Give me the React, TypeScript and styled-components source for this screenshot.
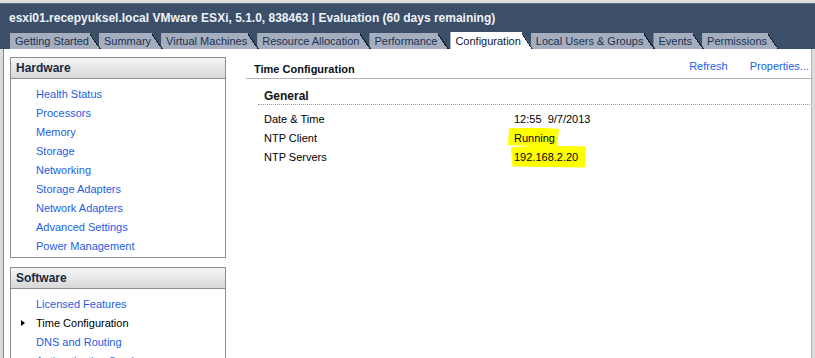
import React from "react";
import styled, { createGlobalStyle } from "styled-components";

const Global = createGlobalStyle`
  html, body { margin: 0; padding: 0; background: #dcdcdc; }
  body { font-family: "Liberation Sans", Arial, sans-serif; font-size: 11px; }
  * { box-sizing: border-box; }
`;

const Page = styled.div`
  width: 815px;
  height: 358px;
  display: flex;
  flex-direction: column;
  overflow: hidden;
  background: #dcdcdc;
  padding-top: 3px;
`;

const Header = styled.div`
  background: #3b4f69;
  border-top: 1px solid #5a6e88;
  height: 46px;
  display: flex;
  flex-direction: column;
`;

const Title = styled.div`
  height: 28px;
  display: flex;
  align-items: center;
  padding-left: 9px;
  color: #eef2f7;
  font-weight: bold;
  font-size: 12px;
  white-space: nowrap;
`;

const TabRow = styled.div`
  margin-top: 1px;
  height: 17px;
  display: flex;
  align-items: flex-end;
  padding-left: 10px;
`;

const Tab = styled.div<{ $active?: boolean; $z: number }>`
  position: relative;
  z-index: ${(p) => (p.$active ? 50 : p.$z)};
  height: ${(p) => (p.$active ? "17px" : "16px")};
  margin-left: ${(p) => (p.$active ? "1px" : "-2px")};
  padding: 0 12px 0 5px;
  display: flex;
  align-items: center;
  font-size: 11px;
  white-space: nowrap;
  color: ${(p) => (p.$active ? "#0c1830" : "#1e3252")};
  background:
    linear-gradient(to top right, transparent calc(50% - 1.2px), #17202c calc(50% - 1.2px), #17202c calc(50% + 0.6px), transparent calc(50% + 0.6px)) right top / 11px 100% no-repeat,
    ${(p) => (p.$active ? "#ffffff" : "#a4aebe")};
  clip-path: polygon(0 0, calc(100% - 11px) 0, 100% 100%, 0 100%);
  &:first-child { margin-left: 0; }
`;

const Body = styled.div`
  flex: 1;
  display: flex;
  background: #ffffff;
  margin-left: 3px;
  margin-right: 3px;
  border-left: 1px solid #868686;
  border-right: 1px solid #b4b4b4;
  min-height: 0;
`;

const Sidebar = styled.div`
  width: 222px;
  flex: none;
  padding: 8px 0 0 6px;
  display: flex;
  flex-direction: column;
  gap: 9px;
`;

const Box = styled.div`
  border: 1px solid #8c8c8c;
  display: flex;
  flex-direction: column;
`;

const BoxHeader = styled.div`
  height: 21px;
  display: flex;
  align-items: center;
  padding-left: 5px;
  font-weight: bold;
  font-size: 12px;
  color: #182a44;
  background: linear-gradient(to bottom, #f6f6f6, #d7d7d7);
  border-bottom: 1px solid #8c8c8c;
`;

const ItemList = styled.div`
  padding: 5px 0 2px;
  display: flex;
  flex-direction: column;
`;

const Item = styled.div<{ $selected?: boolean }>`
  height: 19px;
  display: grid;
  grid-template-columns: 25px auto;
  align-items: center;
  color: ${(p) => (p.$selected ? "#000000" : "#1c5ee8")};
  font-size: 11px;
  white-space: nowrap;
`;

const Marker = styled.span<{ $show?: boolean }>`
  width: 0;
  height: 0;
  margin-left: 10px;
  border-top: 3px solid transparent;
  border-bottom: 3px solid transparent;
  border-left: ${(p) => (p.$show ? "4px solid #000" : "0")};
`;

const Main = styled.div`
  flex: 1;
  padding-left: 20px;
  display: flex;
  flex-direction: column;
`;

const MainHeader = styled.div`
  height: 30px;
  border-bottom: 1px solid #b4b4b4;
  display: flex;
  align-items: flex-end;
  padding: 0 2px 2px 8px;
`;

const MainTitle = styled.div`
  flex: 1;
  font-weight: bold;
  font-size: 11px;
  color: #0a0f1a;
  line-height: 14px;
`;

const Action = styled.span`
  color: #1c5ee8;
  font-size: 11px;
  line-height: 14px;
  margin-bottom: 3px;
  margin-left: 22px;
`;

const Section = styled.div`
  margin: 0 1px 0 12px;
`;

const SectionTitle = styled.div`
  height: 26px;
  padding: 10px 0 0 6px;
  font-weight: bold;
  font-size: 12px;
  color: #141414;
  border-bottom: 1px dotted #9a9a9a;
`;

const Grid = styled.div`
  padding: 4px 0 0 6px;
  display: grid;
  grid-template-columns: 250px auto;
  grid-auto-rows: 19px;
  align-items: center;
  font-size: 11px;
  color: #000;
`;

const Value = styled.div`
  white-space: pre;
`;

const Highlight = styled.span<{ $wide?: boolean }>`
  background: #ffff00;
  padding: ${(p) => (p.$wide ? "5px 8px 5px 3px" : "4px 4px 3px 6px")};
  margin-left: ${(p) => (p.$wide ? "-3px" : "-6px")};
  clip-path: ${(p) =>
    p.$wide
      ? "polygon(0 8%, 40% 0, 100% 4%, 98% 100%, 2% 96%)"
      : "polygon(2% 4%, 60% 0, 100% 8%, 96% 100%, 0 94%)"};
`;

const hardware = [
  "Health Status",
  "Processors",
  "Memory",
  "Storage",
  "Networking",
  "Storage Adapters",
  "Network Adapters",
  "Advanced Settings",
  "Power Management",
];

const software = [
  "Licensed Features",
  "Time Configuration",
  "DNS and Routing",
  "Authentication Services",
];

const tabs = [
  "Getting Started",
  "Summary",
  "Virtual Machines",
  "Resource Allocation",
  "Performance",
  "Configuration",
  "Local Users & Groups",
  "Events",
  "Permissions",
];

export default function App() {
  return (
    <>
      <Global />
      <Page>
        <Header>
          <Title>
            esxi01.recepyuksel.local VMware ESXi, 5.1.0, 838463 | Evaluation (60 days remaining)
          </Title>
          <TabRow>
            {tabs.map((t, i) => (
              <Tab key={t} $active={t === "Configuration"} $z={20 - i}>
                {t}
              </Tab>
            ))}
          </TabRow>
        </Header>
        <Body>
          <Sidebar>
            <Box>
              <BoxHeader>Hardware</BoxHeader>
              <ItemList>
                {hardware.map((h) => (
                  <Item key={h}>
                    <Marker />
                    {h}
                  </Item>
                ))}
              </ItemList>
            </Box>
            <Box>
              <BoxHeader>Software</BoxHeader>
              <ItemList>
                {software.map((s) => (
                  <Item key={s} $selected={s === "Time Configuration"}>
                    <Marker $show={s === "Time Configuration"} />
                    {s}
                  </Item>
                ))}
              </ItemList>
            </Box>
          </Sidebar>
          <Main>
            <MainHeader>
              <MainTitle>Time Configuration</MainTitle>
              <Action>Refresh</Action>
              <Action>Properties...</Action>
            </MainHeader>
            <Section>
              <SectionTitle>General</SectionTitle>
              <Grid>
                <div>Date &amp; Time</div>
                <Value>12:55  9/7/2013</Value>
                <div>NTP Client</div>
                <Value>
                  <Highlight>Running</Highlight>
                </Value>
                <div>NTP Servers</div>
                <Value>
                  <Highlight $wide>192.168.2.20</Highlight>
                </Value>
              </Grid>
            </Section>
          </Main>
        </Body>
      </Page>
    </>
  );
}
